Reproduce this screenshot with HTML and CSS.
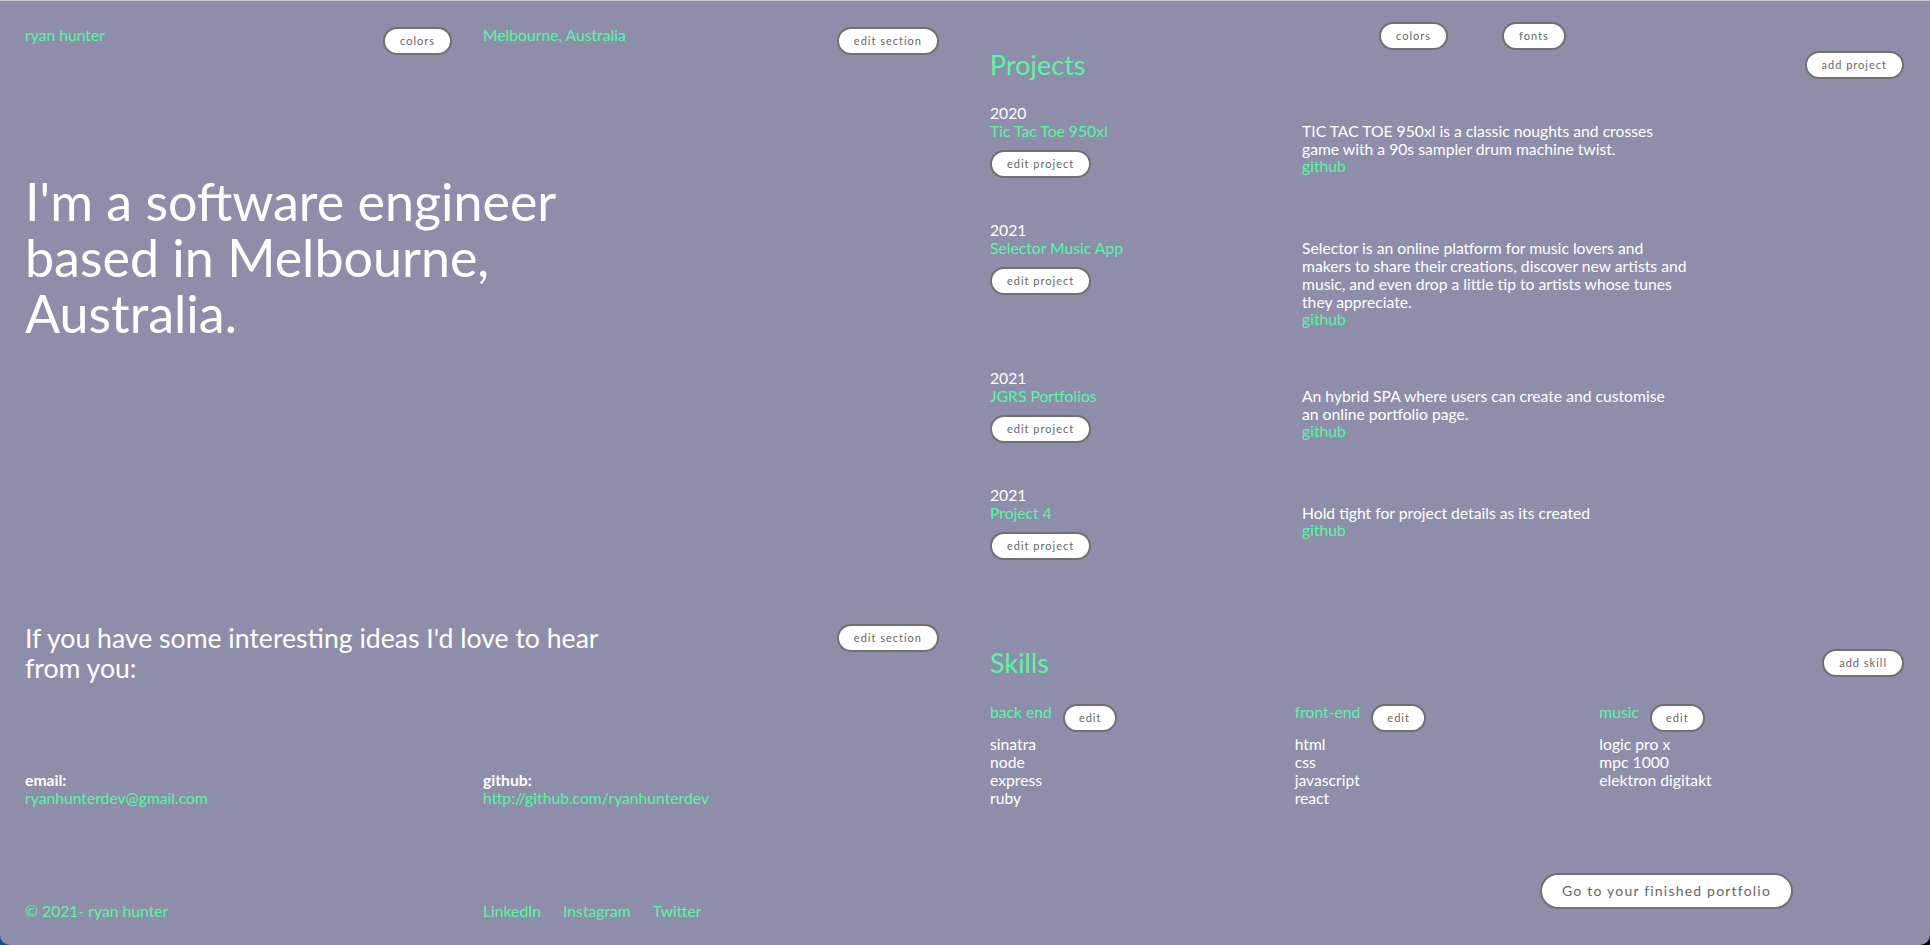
FILE: index.html
```html
<!DOCTYPE html>
<html lang="en">
<head>
<meta charset="utf-8">
<title>ryan hunter — portfolio editor</title>
<link rel="stylesheet" href="styles.css">
</head>
<body>
<div class="page">
  <section class="panel panel-left">
    <div class="header-row">
      <div class="header-cell header-cell-first">
        <a class="link">ryan hunter</a>
        <button class="pill">colors</button>
      </div>
      <div class="header-cell">
        <a class="link">Melbourne, Australia</a>
        <button class="pill">edit section</button>
      </div>
    </div>

    <h1 class="hero">I'm a software engineer based in Melbourne, Australia.</h1>

    <div class="contact-row">
      <h2 class="contact-title">If you have some interesting ideas I'd love to hear from you:</h2>
      <button class="pill pill-offset">edit section</button>
    </div>

    <div class="contact-grid">
      <div>
        <div class="label">email:</div>
        <a class="link">ryanhunterdev@gmail.com</a>
      </div>
      <div>
        <div class="label">github:</div>
        <a class="link">http://github.com/ryanhunterdev</a>
      </div>
    </div>

    <footer class="footer">
      <div class="link">© 2021- ryan hunter</div>
      <nav class="socials">
        <a class="link">LinkedIn</a>
        <a class="link">Instagram</a>
        <a class="link">Twitter</a>
      </nav>
    </footer>
  </section>

  <section class="panel panel-right">
    <div class="toolbar">
      <button class="pill">colors</button>
      <button class="pill">fonts</button>
    </div>

    <div class="section-row">
      <h2 class="section-title">Projects</h2>
      <button class="pill">add project</button>
    </div>

    <div class="projects">
      <article class="project">
        <div class="project-meta">
          <div class="year">2020</div>
          <a class="link">Tic Tac Toe 950xl</a>
          <button class="pill pill-project">edit project</button>
        </div>
        <div class="project-desc">
          <p>TIC TAC TOE 950xl is a classic noughts and crosses<br>game with a 90s sampler drum machine twist.</p>
          <a class="link">github</a>
        </div>
      </article>
      <article class="project">
        <div class="project-meta">
          <div class="year">2021</div>
          <a class="link">Selector Music App</a>
          <button class="pill pill-project">edit project</button>
        </div>
        <div class="project-desc">
          <p>Selector is an online platform for music lovers and<br>makers to share their creations, discover new artists and<br>music, and even drop a little tip to artists whose tunes<br>they appreciate.</p>
          <a class="link">github</a>
        </div>
      </article>
      <article class="project">
        <div class="project-meta">
          <div class="year">2021</div>
          <a class="link">JGRS Portfolios</a>
          <button class="pill pill-project">edit project</button>
        </div>
        <div class="project-desc">
          <p>An hybrid SPA where users can create and customise<br>an online portfolio page.</p>
          <a class="link">github</a>
        </div>
      </article>
      <article class="project">
        <div class="project-meta">
          <div class="year">2021</div>
          <a class="link">Project 4</a>
          <button class="pill pill-project">edit project</button>
        </div>
        <div class="project-desc">
          <p>Hold tight for project details as its created</p>
          <a class="link">github</a>
        </div>
      </article>
    </div>

    <div class="section-row skills-row">
      <h2 class="section-title">Skills</h2>
      <button class="pill">add skill</button>
    </div>

    <div class="skills">
      <div class="skill-col">
        <div class="skill-head"><span class="link">back end</span><button class="pill pill-edit">edit</button></div>
        <ul class="skill-list"><li>sinatra</li><li>node</li><li>express</li><li>ruby</li></ul>
      </div>
      <div class="skill-col">
        <div class="skill-head"><span class="link">front-end</span><button class="pill pill-edit">edit</button></div>
        <ul class="skill-list"><li>html</li><li>css</li><li>javascript</li><li>react</li></ul>
      </div>
      <div class="skill-col">
        <div class="skill-head"><span class="link">music</span><button class="pill pill-edit">edit</button></div>
        <ul class="skill-list"><li>logic pro x</li><li>mpc 1000</li><li>elektron digitakt</li></ul>
      </div>
    </div>

    <div class="finish-row">
      <button class="pill pill-big">Go to your finished portfolio</button>
    </div>
  </section>
</div>
</body>
</html>
```

FILE: styles.css
```css
* { box-sizing: border-box; }

html, body {
  margin: 0;
  height: 100%;
}

body {
  background: linear-gradient(90deg, #15508f 0%, #0b0b14 8%, #000 100%);
  font-family: "Lato", "Open Sans", sans-serif;
  font-size: 15.7px;
  line-height: 18px;
  color: #ffffff;
  overflow: hidden;
}

.page {
  height: 945px;
  background: #8e8eab;
  border-top: 1px solid #c9c9cc;
  border-radius: 0 0 10px 10px;
  display: grid;
  grid-template-columns: 965px 965px;
}

.panel {
  padding: 25px 26px 0 25px;
  display: flex;
  flex-direction: column;
}

.panel-right {
  padding-top: 21px;
}

.link {
  color: #55f8a2;
  text-decoration: none;
}

.pill {
  font-family: "Lato", sans-serif;
  font-size: 11px;
  letter-spacing: 1px;
  color: #666;
  background: #fff;
  border: 2px solid #707070;
  border-radius: 14px;
  height: 28px;
  padding: 0 15px;
  line-height: 24px;
  white-space: nowrap;
  cursor: pointer;
}

/* left panel */
.header-row {
  display: grid;
  grid-template-columns: 458px 1fr;
}

.header-cell {
  display: flex;
  justify-content: space-between;
  align-items: flex-start;
}

.header-cell .pill { margin-top: 1px; }

.header-cell-first { padding-right: 31px; }

.hero {
  margin: 118px 0 0;
  max-width: 600px;
  font-size: 52px;
  line-height: 56px;
  font-weight: 400;
}

.contact-row {
  margin-top: 282px;
  display: flex;
  justify-content: space-between;
  align-items: flex-start;
}

.contact-title {
  margin: 0;
  max-width: 600px;
  font-size: 26.6px;
  line-height: 30px;
  font-weight: 400;
}

.pill-offset { margin-top: 1px; }

.contact-grid {
  margin-top: 88px;
  display: grid;
  grid-template-columns: 458px 1fr;
}

.label { font-weight: 700; }

.contact-grid .link { display: block; }

.footer {
  margin-top: 95px;
  display: grid;
  grid-template-columns: 458px 1fr;
}

.socials {
  display: flex;
  gap: 22px;
}

/* right panel */
.toolbar {
  display: flex;
  gap: 54px;
  padding-left: 389px;
  height: 28px;
}

.section-row {
  display: flex;
  justify-content: space-between;
  align-items: center;
  height: 30px;
}

.section-title {
  margin: 0;
  color: #55f8a2;
  font-size: 27px;
  line-height: 30px;
  font-weight: 400;
}

.projects {
  margin-top: 25px;
}

.project {
  display: grid;
  grid-template-columns: 312px 1fr;
  margin-bottom: 44px;
}

.project-meta {
  display: flex;
  flex-direction: column;
  align-items: flex-start;
}

.year { line-height: 17px; }

.pill-project { margin-top: 10px; }

.project-desc {
  padding-top: 17px;
}

.project-desc p { margin: 0; }

.project-desc .link {
  display: block;
  line-height: 14px;
  padding-top: 1px;
}

.skills-row {
  margin-top: 44px;
}

.skills {
  margin-top: 25px;
  display: grid;
  grid-template-columns: repeat(3, 1fr);
}

.skill-head {
  display: flex;
  align-items: flex-start;
  gap: 11px;
  margin-bottom: 3px;
}

.pill-edit {
  margin-top: 1px;
  padding: 0 14px;
}

.skill-list {
  list-style: none;
  margin: 0;
  padding: 0;
}

.finish-row {
  margin-top: 66px;
  padding-left: 550px;
}

.pill-big {
  height: 36px;
  border-radius: 18px;
  font-size: 14px;
  line-height: 32px;
  padding: 0 20px;
  letter-spacing: 1.2px;
}
```
